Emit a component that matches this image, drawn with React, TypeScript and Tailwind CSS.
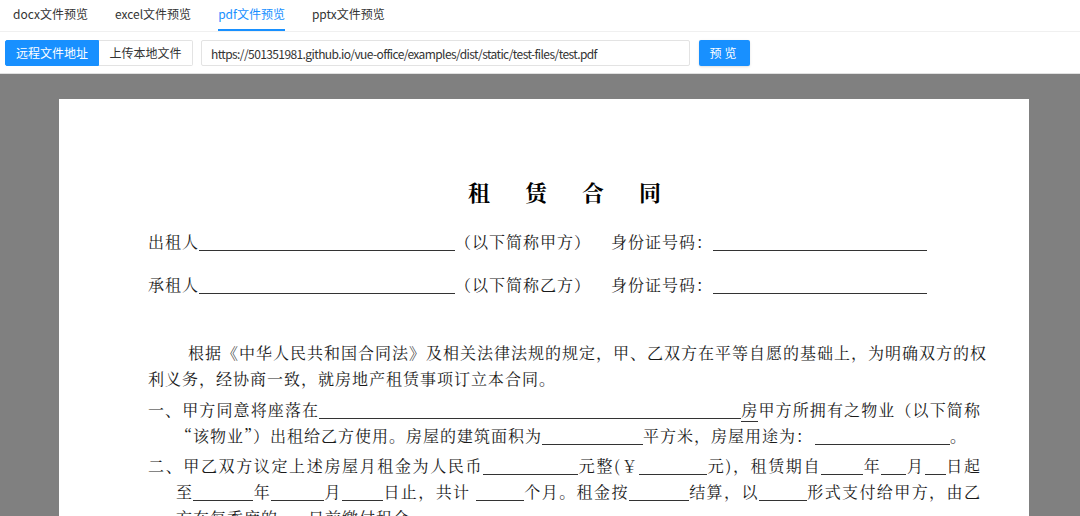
import React from 'react';

const ui = "font-['Noto_Sans_CJK_SC','Noto_Sans',sans-serif]";
const doc = "font-['Noto_Serif_CJK_SC','Noto_Sans_CJK_SC',serif]";

const Blank = ({ w, className = '' }: { w: number; className?: string }) => (
  <span
    className={`inline-block h-[17px] border-b border-[#333] align-[-3px] ${className}`}
    style={{ width: w }}
  />
);

const tabs = ['docx文件预览', 'excel文件预览', 'pdf文件预览', 'pptx文件预览'];

export default function App() {
  return (
    <div className={`h-[516px] w-[1080px] overflow-hidden bg-white ${ui}`}>
      {/* tabs */}
      <div className="flex h-[32px] items-stretch gap-[27px] border-b border-[#f0f0f0] pl-[13px]">
        {tabs.map((t, i) => (
          <div
            key={t}
            className={`flex items-center border-b-2 pb-[2px] text-[12px] ${
              i === 2 ? 'border-[#1890ff] text-[#1890ff]' : 'border-transparent text-[#333]'
            }`}
          >
            {t}
          </div>
        ))}
      </div>

      {/* controls */}
      <div className="flex h-[42px] items-start border-b border-[#e0e0e0] pl-[5px] pt-[8px]">
        <div className="flex">
          <button className="h-[26px] w-[94px] rounded-l-[2px] border border-[#1890ff] bg-[#1890ff] text-[12px] text-white">
            远程文件地址
          </button>
          <button className="h-[26px] w-[94px] rounded-r-[2px] border border-l-0 border-[#e3e3e3] bg-white text-[12px] text-[#333]">
            上传本地文件
          </button>
        </div>
        <input
          readOnly
          value="https://501351981.github.io/vue-office/examples/dist/static/test-files/test.pdf"
          className="ml-[8px] h-[26px] w-[489px] rounded-[2px] border border-[#e3e3e3] px-[9px] text-[12px] tracking-[-0.6px] text-[#333] outline-none"
        />
        <button className="ml-[9px] h-[26px] w-[51px] rounded-[2px] bg-[#1890ff] text-[12px] tracking-[3px] text-white shadow-sm">
          预览
        </button>
      </div>

      {/* viewer */}
      <div className="h-full bg-[#808080] pl-[59px] pt-[25px]">
        <div
          className={`w-[970px] bg-white pb-[40px] pl-[89px] pr-[48px] pt-[82px] text-[16px] tracking-[1px] text-[#1a1a1a] ${doc}`}
        >
          <div className="flex h-[22px] items-center justify-center gap-[35px] text-[22px] font-bold leading-[22px] tracking-normal text-black">
            <span>租</span>
            <span>赁</span>
            <span>合</span>
            <span>同</span>
          </div>

          <div className="mt-[26px] whitespace-nowrap leading-[26px]">
            出租人<Blank w={256} />（以下简称甲方）<span className="ml-[20px]">身份证号码：</span>
            <Blank w={214} />
          </div>
          <div className="mt-[17px] whitespace-nowrap leading-[26px]">
            承租人<Blank w={256} />（以下简称乙方）<span className="ml-[20px]">身份证号码：</span>
            <Blank w={214} />
          </div>

          <div className="mt-[42px] leading-[26px]">
            <div className="whitespace-nowrap pl-[40px] text-justify [text-align-last:justify]">
              根据《中华人民共和国合同法》及相关法律法规的规定，甲、乙双方在平等自愿的基础上，为明确双方的权
            </div>
            <div className="whitespace-nowrap">利义务，经协商一致，就房地产租赁事项订立本合同。</div>
          </div>

          <div className="mt-[5px] leading-[26px]">
            <div className="whitespace-nowrap text-justify [text-align-last:justify]">
              一、甲方同意将座落在<Blank w={422} />
              <span className="border-b border-[#333]">房</span>甲方所拥有之物业（以下简称
            </div>
            <div className="whitespace-nowrap pl-[28px]">
              “该物业”）出租给乙方使用。房屋的建筑面积为<Blank w={101} />平方米，房屋用途为：
              <Blank w={135} className="ml-[2px]" />。
            </div>
          </div>

          <div className="mt-[4px] leading-[26px]">
            <div className="whitespace-nowrap text-justify [text-align-last:justify]">
              二、甲乙双方议定上述房屋月租金为人民币<Blank w={95} />元整(￥<Blank w={68} />元)，租赁期自
              <Blank w={42} />年<Blank w={25} />月<Blank w={21} />日起
            </div>
            <div className="whitespace-nowrap pl-[28px] text-justify [text-align-last:justify]">
              至<Blank w={60} />年<Blank w={53} />月<Blank w={41} />日止，共计 <Blank w={48} />
              个月。租金按<Blank w={60} />结算，以<Blank w={48} />形式支付给甲方，由乙
            </div>
            <div className="whitespace-nowrap pl-[28px]">
              方在每季度的<Blank w={30} />日前缴付租金。
            </div>
          </div>
        </div>
      </div>
    </div>
  );
}
